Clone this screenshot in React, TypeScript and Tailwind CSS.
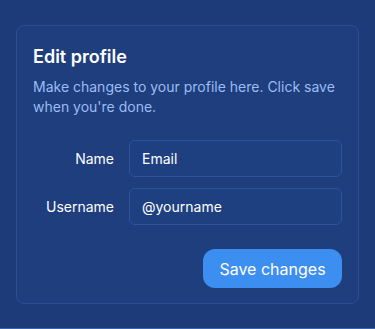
export default function App() {
  return (
    <div
      className="h-[329px] w-[375px] bg-[#1d3b79] px-4 pt-[25px] border-b border-[#3a64ad]"
      style={{ fontFamily: "Inter, 'Noto Sans', sans-serif" }}
    >
      <div className="rounded-lg border border-[#2c4f92] bg-[#1e3e7e] px-4 pt-[17px] pb-[15px]">
        <h2 className="text-[18px] font-semibold leading-7 text-white">Edit profile</h2>
        <p className="mt-[6px] text-[14px] leading-5 text-[#9bbcf2]">
          Make changes to your profile here. Click save when you're done.
        </p>
        <div className="mt-[23px] flex flex-col gap-[11px]">
          <div className="flex items-center">
            <label className="w-[81px] text-right text-[14px] text-white">Name</label>
            <div className="ml-[15px] flex h-[37px] flex-1 items-center rounded-md border border-[#2f5399] bg-[#1e3f80] px-3 text-[14px] text-white">
              Email
            </div>
          </div>
          <div className="flex items-center">
            <label className="w-[81px] text-right text-[14px] text-white">Username</label>
            <div className="ml-[15px] flex h-[37px] flex-1 items-center rounded-md border border-[#2f5399] bg-[#1e3f80] px-3 text-[14px] text-white">
              @yourname
            </div>
          </div>
        </div>
        <div className="mt-[24px] flex justify-end">
          <button className="h-[39px] w-[139px] rounded-xl bg-[#3d8ef1] text-[16px] text-white">
            Save changes
          </button>
        </div>
      </div>
    </div>
  );
}
